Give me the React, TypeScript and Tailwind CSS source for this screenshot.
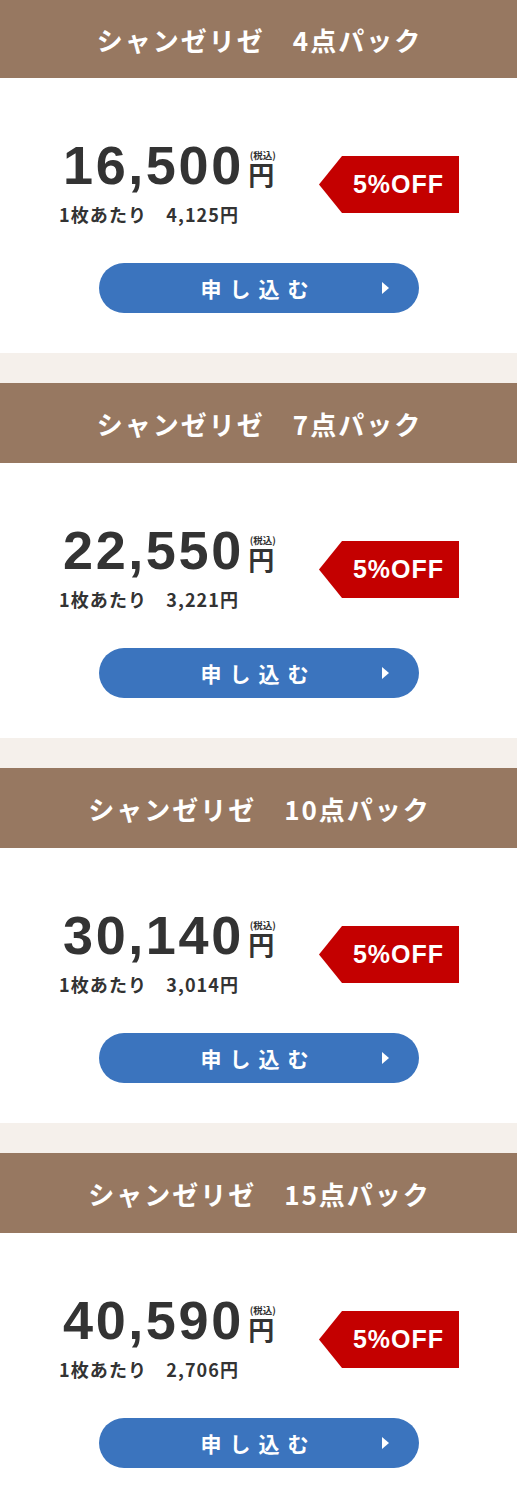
import React from "react";

const packs = [
  { name: "シャンゼリゼ　4点パック", price: "16,500", per: "4,125" },
  { name: "シャンゼリゼ　7点パック", price: "22,550", per: "3,221" },
  { name: "シャンゼリゼ　10点パック", price: "30,140", per: "3,014" },
  { name: "シャンゼリゼ　15点パック", price: "40,590", per: "2,706" },
];

const jp = "font-['Noto_Sans_CJK_JP','Noto_Sans',sans-serif]";
const num = "font-['Liberation_Sans','Noto_Sans_CJK_JP',sans-serif]";

function Card({ p, first }: { p: (typeof packs)[number]; first: boolean }) {
  return (
    <div>
      <div
        className={`${first ? "h-[78px]" : "h-[80px]"} bg-[#977861] flex items-center justify-center text-white text-[26px] font-bold tracking-[2px] pl-[2px] ${jp}`}
      >
        {p.name}
      </div>
      <div className="bg-white pt-[60px] pb-[40px]">
        <div className="flex items-start justify-between pl-[59px] pr-[58px]">
          <div className="text-[#333]">
            <div className="flex items-end">
              <span className={`${num} text-[54px] leading-none font-bold tracking-[2.6px] ml-[4px]`}>{p.price}</span>
              <span className={`flex flex-col items-center ${jp} font-bold ml-[3px] mb-[5px]`}>
                <span className="text-[9.5px] leading-none whitespace-nowrap mb-[1px] ml-[3px]">(税込)</span>
                <span className="text-[26px] leading-none">円</span>
              </span>
            </div>
            <div className={`${jp} text-[18px] font-bold leading-none mt-[13px] tracking-[1.1px]`}>
              1枚あたり　{p.per}円
            </div>
          </div>
          <div className="mt-[18px] w-[140px] h-[57px] bg-[#c40000] [clip-path:polygon(23px_0,100%_0,100%_100%,23px_100%,0_50%)] flex items-center justify-end pr-[15px]">
            <span className={`${num} text-white text-[25px] font-bold leading-none tracking-[1px]`}>5%OFF</span>
          </div>
        </div>
        <div className="flex justify-center mt-[40px]">
          <div className="relative w-[320px] h-[50px] rounded-full bg-[#3b74be] flex items-center pl-[102px]">
            <span className={`${jp} text-white text-[21px] font-bold tracking-[8px] leading-none`}>申し込む</span>
            <svg className="absolute left-[283px] top-[19px]" width="7" height="12" viewBox="0 0 7 12">
              <polygon points="0,0 7,6 0,12" fill="#fff" />
            </svg>
          </div>
        </div>
      </div>
    </div>
  );
}

export default function App() {
  return (
    <div className="w-[517px] bg-[#f5f0eb] flex flex-col gap-[30px]">
      {packs.map((p, i) => (
        <Card key={i} p={p} first={i === 0} />
      ))}
    </div>
  );
}
